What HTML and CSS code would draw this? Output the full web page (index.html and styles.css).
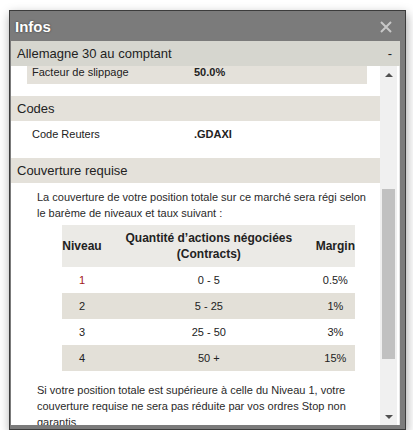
FILE: index.html
```html
<!DOCTYPE html>
<html lang="fr">
<head>
<meta charset="utf-8">
<title>Infos</title>
<link rel="stylesheet" href="styles.css">
</head>
<body>
<div class="dialog">
  <div class="titlebar">
    <span class="title">Infos</span>
    <svg class="close" width="12" height="12" viewBox="0 0 12 12"><path d="M1 1 L11 11 M11 1 L1 11" stroke="#c8c8c8" stroke-width="2" fill="none"/></svg>
  </div>
  <div class="panel">
    <div class="mainhead"><span>Allemagne 30 au comptant</span><span class="toggle">-</span></div>
    <div class="scrollwrap">
      <div class="scrollcontent">
        <div class="section">
          <div class="body">
            <div class="row shaded cut"><span class="label">Facteur de slippage</span><span class="val">50.0%</span></div>
          </div>
        </div>
        <div class="section">
          <div class="sechead">Codes</div>
          <div class="body">
            <div class="row"><span class="label">Code Reuters</span><span class="val">.GDAXI</span></div>
          </div>
        </div>
        <div class="section">
          <div class="sechead">Couverture requise</div>
          <div class="body text">
            <p>La couverture de votre position totale sur ce marché sera régi selon le barème de niveaux et taux suivant :</p>
            <table class="levels">
              <thead>
                <tr><th class="c1">Niveau</th><th class="c2">Quantité d’actions négociées<br>(Contracts)</th><th class="c3">Margin</th></tr>
              </thead>
              <tbody>
                <tr><td class="current">1</td><td>0 - 5</td><td>0.5%</td></tr>
                <tr class="alt"><td>2</td><td>5 - 25</td><td>1%</td></tr>
                <tr><td>3</td><td>25 - 50</td><td>3%</td></tr>
                <tr class="alt"><td>4</td><td>50 +</td><td>15%</td></tr>
              </tbody>
            </table>
            <p class="after">Si votre position totale est supérieure à celle du Niveau 1, votre couverture requise ne sera pas réduite par vos ordres Stop non garantis</p>
          </div>
        </div>
      </div>
      <div class="scrollbar">
        <div class="arrow"><span class="tri up"></span></div>
        <div class="track"><div class="thumb"></div></div>
        <div class="arrow"><span class="tri down"></span></div>
      </div>
    </div>
  </div>
</div>
</body>
</html>
```

FILE: styles.css
```css
html, body {
  margin: 0;
  padding: 0;
  background: #ffffff;
}
body {
  font-family: "Liberation Sans", Arial, sans-serif;
  color: #222;
  font-size: 11px;
}
.dialog {
  margin: 10px 0 0 9px;
  width: 389px;
  height: 414px;
  border: 1px solid #3c3c3c;
  background: #7b7b7b;
  padding: 0 5px 4px 1px;
  box-shadow: 1px 4px 10px rgba(0,0,0,0.35);
  display: flex;
  flex-direction: column;
}
.titlebar {
  height: 30px;
  display: flex;
  align-items: center;
  justify-content: space-between;
  padding: 0 8px 0 4px;
  flex: none;
}
.title {
  color: #fff;
  font-weight: bold;
  font-size: 15px;
  text-shadow: 0 0 2px #333;
  margin-top: 1px;
}
.close {
  display: block;
  margin-top: 2px;
}
.panel {
  flex: 1;
  background: #fff;
  display: flex;
  flex-direction: column;
  overflow: hidden;
}
.mainhead {
  height: 25px;
  flex: none;
  background: #d6d6cf;
  display: flex;
  align-items: center;
  justify-content: space-between;
  padding: 0 8px 0 6px;
  font-size: 13px;
  color: #222;
}
.toggle {
  font-size: 13px;
}
.scrollwrap {
  flex: 1;
  display: flex;
  overflow: hidden;
  border-right: 1px solid #e4e4e4;
}
.scrollcontent {
  width: 369px;
  flex: none;
  overflow: hidden;
}
.sechead {
  height: 25px;
  background: #e4e1da;
  display: flex;
  align-items: center;
  padding-left: 6px;
  font-size: 13px;
  color: #222;
}
.body {
  padding: 0 13px 12px 16px;
}
.row {
  height: 25px;
  display: flex;
  align-items: center;
  padding-left: 5px;
  font-size: 11px;
}
.row.shaded {
  background: #e4e1da;
}
.row.cut {
  margin-top: -7px;
}
.label {
  width: 162px;
  flex: none;
}
.val {
  font-weight: bold;
}
.body.text {
  padding: 6px 10px 0 26px;
}
.body.text p {
  margin: 0;
  line-height: 16px;
  color: #2a2a2a;
  font-size: 11px;
}
.body.text p.after {
  margin-top: 11px;
}
.levels {
  margin: 4px 0 0 25px;
  width: 293px;
  border-collapse: collapse;
  color: #222;
}
.levels th {
  background: #ebeae6;
  height: 42px;
  padding: 0;
  font-weight: bold;
  font-size: 12px;
  line-height: 16px;
  text-align: center;
}
.levels th.c1 { width: 40px; }
.levels th.c3 { width: 39px; }
.levels td {
  height: 26px;
  padding: 0;
  text-align: center;
  font-size: 11px;
}
.levels tr.alt td {
  background: #e3e0d8;
}
.levels td.current {
  color: #a01818;
}
.scrollbar {
  width: 17px;
  flex: none;
  background: #f0f0f0;
  display: flex;
  flex-direction: column;
}
.arrow {
  height: 17px;
  flex: none;
  display: flex;
  align-items: center;
  justify-content: center;
}
.tri {
  width: 0;
  height: 0;
  border-left: 4px solid transparent;
  border-right: 4px solid transparent;
}
.tri.up {
  border-bottom: 4px solid #505050;
}
.tri.down {
  border-top: 4px solid #505050;
}
.track {
  flex: 1;
  padding: 0 2px;
}
.thumb {
  margin-top: 106px;
  height: 170px;
  background: #c1c1c1;
}
```
